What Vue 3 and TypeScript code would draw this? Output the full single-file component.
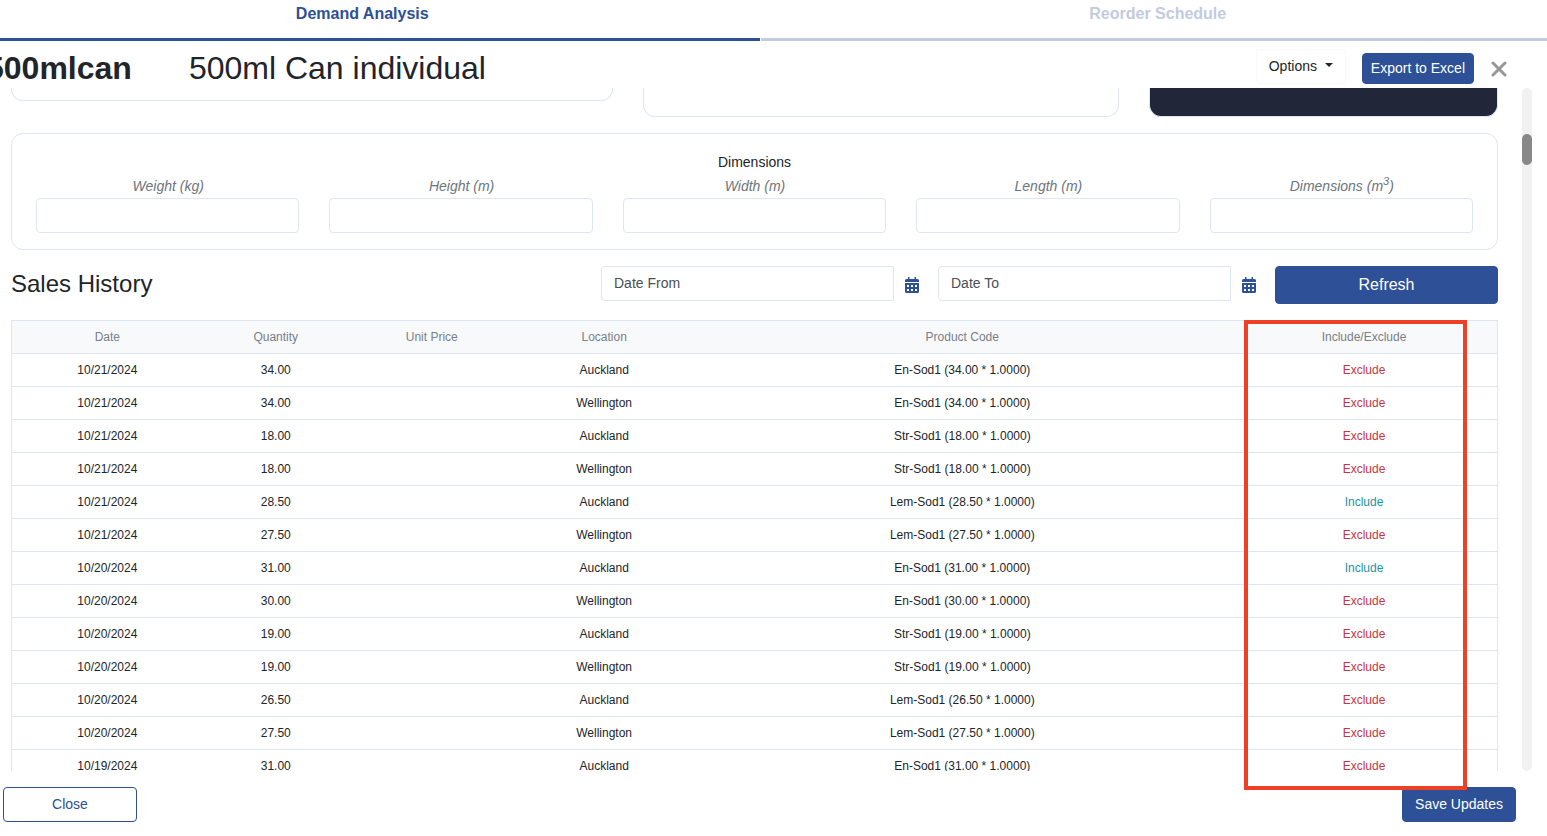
<script setup lang="ts">
import { ref } from 'vue'

interface Sale {
  date: string
  quantity: string
  location: string
  product: string
  excluded: boolean
}

const tabs = ['Demand Analysis', 'Reorder Schedule']
const activeTab = ref(0)

const dimensions = [
  { id: 'weight', label: 'Weight (kg)' },
  { id: 'height', label: 'Height (m)' },
  { id: 'width', label: 'Width (m)' },
  { id: 'length', label: 'Length (m)' },
  { id: 'volume', label: 'Dimensions (m', power: '3' },
]

const dateFields = [
  { id: 'date-from', label: 'Date From' },
  { id: 'date-to', label: 'Date To' },
]

const columns = ['Date', 'Quantity', 'Unit Price', 'Location', 'Product Code', 'Include/Exclude']

function sale(date: string, quantity: string, location: string, code: string, excluded = true): Sale {
  return { date, quantity, location, product: `${code} (${quantity} * 1.0000)`, excluded }
}

const sales = ref<Sale[]>([
  sale('10/21/2024', '34.00', 'Auckland', 'En-Sod1'),
  sale('10/21/2024', '34.00', 'Wellington', 'En-Sod1'),
  sale('10/21/2024', '18.00', 'Auckland', 'Str-Sod1'),
  sale('10/21/2024', '18.00', 'Wellington', 'Str-Sod1'),
  sale('10/21/2024', '28.50', 'Auckland', 'Lem-Sod1', false),
  sale('10/21/2024', '27.50', 'Wellington', 'Lem-Sod1'),
  sale('10/20/2024', '31.00', 'Auckland', 'En-Sod1', false),
  sale('10/20/2024', '30.00', 'Wellington', 'En-Sod1'),
  sale('10/20/2024', '19.00', 'Auckland', 'Str-Sod1'),
  sale('10/20/2024', '19.00', 'Wellington', 'Str-Sod1'),
  sale('10/20/2024', '26.50', 'Auckland', 'Lem-Sod1'),
  sale('10/20/2024', '27.50', 'Wellington', 'Lem-Sod1'),
  sale('10/19/2024', '31.00', 'Auckland', 'En-Sod1'),
])
</script>

<template>
  <div class="page">
    <nav class="tabs">
      <button
        v-for="(tab, i) in tabs"
        :key="tab"
        type="button"
        class="tab"
        :class="{ active: activeTab === i }"
        @click="activeTab = i"
      >
        {{ tab }}
      </button>
    </nav>

    <header class="header">
      <h1 class="code">500mlcan</h1>
      <h2 class="name">500ml Can individual</h2>
      <button type="button" class="btn options">Options <span class="caret"></span></button>
      <button type="button" class="btn primary export">Export to Excel</button>
      <button type="button" class="dismiss" aria-label="Dismiss">
        <svg width="16" height="16" viewBox="0 0 16 16">
          <path d="M2 2L14 14M14 2L2 14" stroke="#979797" stroke-width="3" stroke-linecap="round" />
        </svg>
      </button>
    </header>

    <div class="body">
      <main class="content">
        <div class="cards">
          <div class="card short"></div>
          <div class="card"></div>
          <div class="card dark"></div>
        </div>

        <section class="dimensions">
          <h3 class="dimensions-title">Dimensions</h3>
          <div class="dimension-grid">
            <div v-for="d in dimensions" :key="d.id" class="dimension">
              <label :for="d.id">{{ d.label }}<template v-if="d.power"><sup>{{ d.power }}</sup>)</template></label>
              <input :id="d.id" type="text" class="field" />
            </div>
          </div>
        </section>

        <div class="filters">
          <h3 class="filters-title">Sales History</h3>
          <div v-for="f in dateFields" :key="f.id" class="date">
            <input :id="f.id" type="text" class="field date-field" :placeholder="f.label" :aria-label="f.label" />
            <button type="button" class="calendar" :aria-label="`Pick ${f.label}`">
              <svg width="14" height="16" viewBox="0 0 14 16">
                <path
                  fill="#2d5097"
                  fill-rule="evenodd"
                  d="M3 0h1.500v2h5V0H11v2h1.500A1.500 1.500 0 0 1 14 3.500V5H0V3.500A1.500 1.500 0 0 1 1.500 2H3zM0 6h14v8.500a1.500 1.500 0 0 1-1.500 1.500h-11A1.500 1.500 0 0 1 0 14.500zM2 8v2h2V8zM6 8v2h2V8zM10 8v2h2V8zM2 12v2h2v-2zM6 12v2h2v-2zM10 12v2h2v-2z"
                />
              </svg>
            </button>
          </div>
          <button type="button" class="btn primary refresh">Refresh</button>
        </div>

        <table class="sales">
          <colgroup>
            <col class="c-date" />
            <col class="c-quantity" />
            <col class="c-price" />
            <col class="c-location" />
            <col class="c-product" />
            <col class="c-toggle" />
          </colgroup>
          <thead>
            <tr>
              <th v-for="c in columns" :key="c" scope="col">{{ c }}</th>
            </tr>
          </thead>
          <tbody>
            <tr v-for="(s, i) in sales" :key="i">
              <td>{{ s.date }}</td>
              <td>{{ s.quantity }}</td>
              <td></td>
              <td>{{ s.location }}</td>
              <td>{{ s.product }}</td>
              <td>
                <button
                  type="button"
                  class="toggle"
                  :class="{ include: !s.excluded }"
                  @click="s.excluded = !s.excluded"
                >
                  {{ s.excluded ? 'Exclude' : 'Include' }}
                </button>
              </td>
            </tr>
          </tbody>
        </table>
      </main>
      <div class="track"><div class="thumb"></div></div>
    </div>

    <footer class="footer">
      <button type="button" class="btn close">Close</button>
      <button type="button" class="btn primary save">Save Updates</button>
    </footer>

    <div class="highlight"></div>
  </div>
</template>

<style>
body {
  margin: 0;
  background: #fff;
}
</style>

<style scoped>
.page,
.page * {
  box-sizing: border-box;
}

.page {
  position: relative;
  display: flex;
  flex-direction: column;
  height: 100vh;
  overflow: hidden;
  color: #212529;
  font-family: 'Liberation Sans', Arial, sans-serif;
  font-size: 14px;
  line-height: 20px;
}

button,
input {
  margin: 0;
  font: inherit;
}

button {
  cursor: pointer;
}

h1,
h2,
h3 {
  margin: 0;
  font-weight: 400;
}

.tabs {
  display: flex;
  gap: 1px;
  flex: none;
  margin: 0 -8px 0 -35px;
}

.tab {
  flex: 1;
  height: 41px;
  padding: 0 0 11px;
  border: 0;
  border-bottom: 3px solid #c2cbdf;
  background: none;
  color: #c2cbdf;
  font-size: 16px;
  font-weight: 700;
}

.tab.active {
  border-color: #2d5097;
  color: #2d5097;
}

.header {
  display: flex;
  align-items: flex-start;
  flex: none;
  height: 47px;
  margin-left: -14px;
  padding: 8px 40px 0 0;
}

.code,
.name {
  font-size: 32px;
  line-height: 38px;
  white-space: nowrap;
}

.code {
  margin-right: 57px;
  font-weight: 700;
}

.name {
  flex: 1;
}

.btn {
  padding: 0 12px 2px;
  border: 1px solid transparent;
  border-radius: 4px;
  background: #fff;
  text-align: center;
  white-space: nowrap;
}

.primary {
  border-color: #2d5097;
  background: #2d5097;
  color: #fff;
}

.options {
  height: 35px;
  border-color: #f8f9fa;
  color: #212529;
}

.caret {
  display: inline-block;
  margin-left: 4px;
  border: 4px solid transparent;
  border-top-color: #212529;
  border-bottom: 0;
  vertical-align: 4px;
}

.export {
  height: 31px;
  margin: 4px 17px 0 16px;
  padding: 0 8px 2px;
}

.dismiss {
  margin-top: 12px;
  padding: 0;
  border: 0;
  background: none;
  line-height: 0;
}

.body {
  display: flex;
  flex: 1;
  gap: 24px;
  min-height: 0;
  padding: 0 15px 0 11px;
}

.content {
  flex: 1;
  min-width: 0;
  overflow: hidden;
}

.track {
  flex: none;
  width: 10px;
  border-radius: 5px;
  background: #f1f1f1;
}

.thumb {
  height: 31px;
  margin-top: 46px;
  border-radius: 5px;
  background: #888;
}

.cards {
  display: grid;
  grid-template-columns: 602fr 476fr 349fr;
  gap: 30px;
  align-items: start;
}

.card {
  height: 29px;
  border: 1px solid #dfe5f6;
  border-top: 0;
  border-radius: 0 0 12px 12px;
}

.short {
  height: 13px;
}

.dark {
  background: #212639;
}

.dimensions {
  margin-top: 16px;
  padding: 18px 24px 16px;
  border: 1px solid #dfe5f6;
  border-radius: 12px;
  text-align: center;
}

.dimensions-title {
  font-size: 14px;
}

.dimension-grid {
  display: grid;
  grid-template-columns: repeat(5, 1fr);
  gap: 30px;
  margin-top: 4px;
}

.dimension {
  display: flex;
  flex-direction: column;
  gap: 2px;
}

.dimension label {
  height: 20px;
  padding-left: 1px;
  color: #6c757d;
  font-style: italic;
}

sup {
  font-size: 11px;
  line-height: 0;
}

.field {
  width: 100%;
  height: 35px;
  padding: 0 12px 2px;
  border: 1px solid #dfe5f6;
  border-radius: 4px;
  background: #fff;
  color: #495057;
}

.field::placeholder {
  color: #495057;
  opacity: 1;
}

.filters {
  display: grid;
  grid-template-columns: 571fr 318fr 318fr 223fr;
  gap: 19px;
  align-items: start;
  margin-top: 16px;
}

.filters-title {
  font-size: 24px;
  line-height: 36px;
}

.date {
  display: flex;
  gap: 11px;
}

.date-field {
  flex: 1;
  min-width: 0;
  border-radius: 4px 0 0 4px;
}

.calendar {
  flex: none;
  height: 38px;
  padding: 0;
  border: 0;
  background: none;
  line-height: 0;
}

.refresh {
  height: 38px;
  padding-bottom: 1px;
  font-size: 16px;
}

.sales {
  width: 100%;
  margin-top: 16px;
  border-collapse: collapse;
  border: 1px solid #dfe5f6;
  table-layout: fixed;
  font-size: 12px;
  line-height: 16px;
  text-align: center;
}

.c-date {
  width: 12.8%;
}

.c-quantity {
  width: 9.9%;
}

.c-price {
  width: 11.1%;
}

.c-location {
  width: 12.1%;
}

.c-product {
  width: 36.1%;
}

.c-toggle {
  width: 18%;
}

.sales th,
.sales td {
  height: 33px;
  padding: 0 0 0 1px;
  border-bottom: 1px solid #dfe5f6;
}

.sales th {
  background: #f8f9fb;
  color: #787f87;
  font-weight: 400;
}

.toggle {
  display: block;
  width: 100%;
  padding: 0;
  border: 0;
  background: none;
  color: #cb343f;
}

.include {
  color: #2592a6;
}

.footer {
  display: flex;
  justify-content: space-between;
  flex: none;
  padding: 16px 31px 14px 3px;
}

.close,
.save {
  height: 35px;
}

.close {
  width: 134px;
  border-color: #2d5097;
  color: #2d5097;
}

/* Callout drawn over the table's last column and the footer. */
.highlight {
  position: absolute;
  top: 320px;
  right: 80px;
  bottom: 46px;
  width: 223px;
  border: 4px solid #ec4027;
  pointer-events: none;
}
</style>
